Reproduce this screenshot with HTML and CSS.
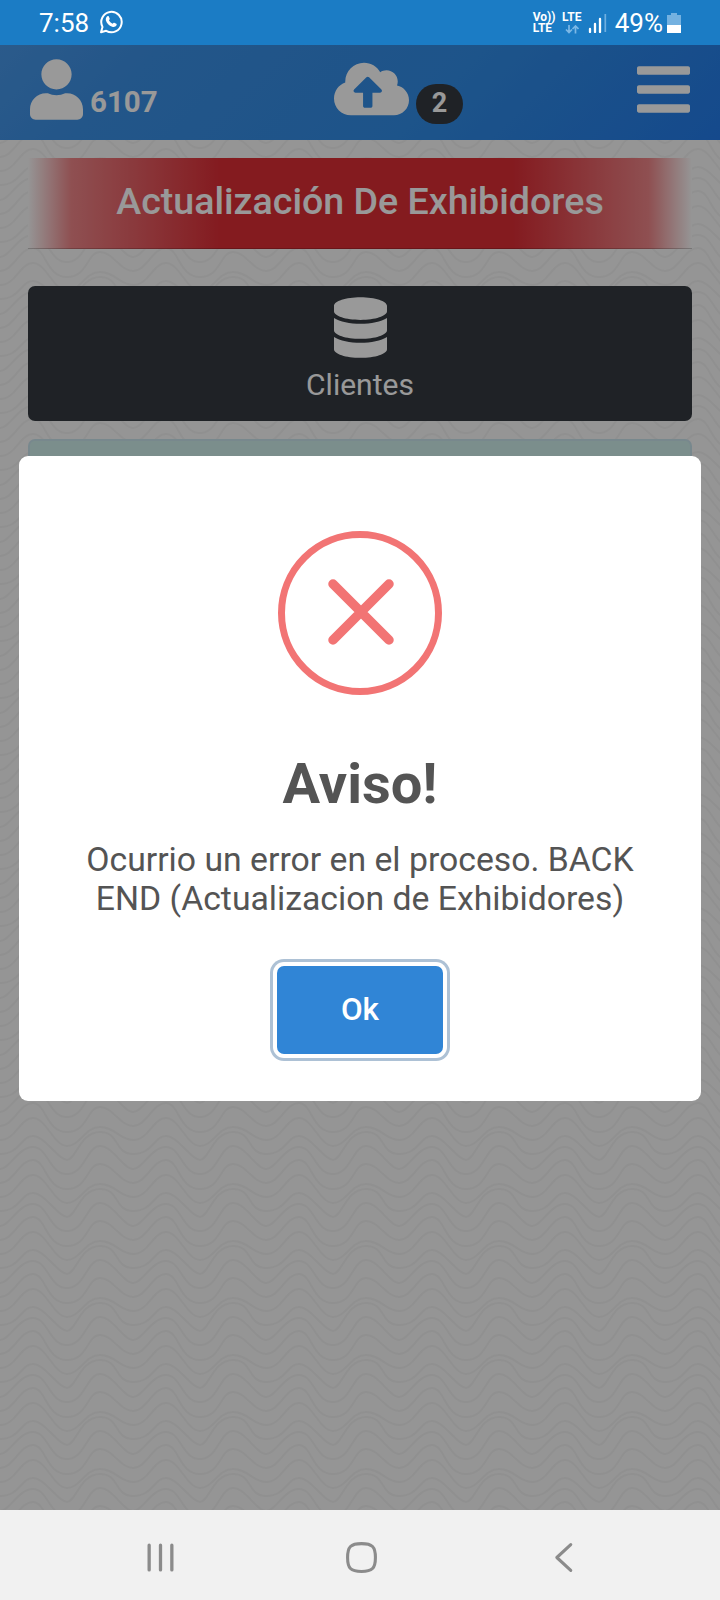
FILE: index.html
```
<!DOCTYPE html>
<html lang="es">
<head>
  <meta charset="UTF-8" />
  <meta name="viewport" content="width=device-width, initial-scale=1.0"/>
  <title>Actualización De Exhibidores</title>
  <link rel="stylesheet" href="styles.css">
</head>
<body>

  <div class="status-bar">
    <div class="status-left">
      <span class="time">7:58</span>
      <svg class="whatsapp" viewBox="0 0 24 24">
        <path d="M2 22.2l1.5-5.3A10.2 10.2 0 1 1 7.200 20.800z" fill="none" stroke="#fff" stroke-width="2" stroke-linejoin="round"/>
        <path d="M8.300 6.300c.5-.4 1.200-.4 1.500.2l.9 2c.2.5 0 .9-.8 1.800.8 1.600 2 2.700 3.700 3.500.9-1.100 1.200-1.300 1.700-1.100l2 1c.5.3.5.8.2 1.500-.8 1.600-2.600 2-4.300 1.500-3.300-1-5.400-3.200-6.300-6.100-.4-1.700.3-3.400 1.400-4.300z" fill="#fff"/>
      </svg>
    </div>
    <div class="status-right">
      <div class="volte"><span>Vo))</span><span>LTE</span></div>
      <div class="lte">
        <span>LTE</span>
        <svg viewBox="0 0 14 9"><path d="M4 0v7M1 4.500l3 3 3-3M10.500 8.500v-7M7.500 4l3-3 3 3" fill="none" stroke="#7cb8e6" stroke-width="1.700"/></svg>
      </div>
      <svg class="signal" viewBox="0 0 19 20">
        <path d="M2 16v3M7 11v8M12 6v13" stroke="#fff" stroke-width="2.300" stroke-linecap="round"/>
        <path d="M17.300 1v18" stroke="#6fafe0" stroke-width="1.700"/>
      </svg>
      <span class="battery-text">49%</span>
      <svg class="battery" viewBox="0 0 14 20">
        <path d="M4 0h6v2h4v10H0V2h4z" fill="#74b1e0"/>
        <path d="M0 12h14v8H0z" fill="#fff"/>
      </svg>
    </div>
  </div>

  <div class="app">
    <svg class="waves">
      <defs>
        <pattern id="wave" y="12" width="133" height="57" patternUnits="userSpaceOnUse">
          <g fill="none" stroke="#f1f1f1" stroke-width="2">
            <path id="w1" d="M0 0C16 0 20-22 33-22S54 6 67 6S85-13 100-13S120 0 133 0"/>
            <path id="w2" d="M0 14C20 14 21-4 33-4S58 20 67 20S80-8 100-8S114 14 133 14"/>
            <path id="w3" d="M0 29C10 29 18 7 33 7S49 34 67 34S87 6 100 6S123 29 133 29"/>
            <path id="w4" d="M0 43C13 43 20 20 33 20S46 49 67 49S87 24 100 24S120 43 133 43"/>
            <use href="#w1" y="57"/>
            <use href="#w2" y="57"/>
            <use href="#w3" y="57"/>
            <use href="#w4" y="-57"/>
          </g>
        </pattern>
      </defs>
      <rect width="100%" height="100%" fill="url(#wave)"/>
    </svg>

    <header>
      <div class="user">
        <svg class="icon-user" viewBox="0 0 448 512"><path d="M224 256c70.700 0 128-57.300 128-128S294.700 0 224 0 96 57.300 96 128s57.300 128 128 128zm89.600 32h-16.700c-22.200 10.200-46.900 16-72.900 16s-50.600-5.800-72.900-16h-16.700C60.200 288 0 348.200 0 422.400V464c0 26.500 21.500 48 48 48h352c26.500 0 48-21.500 48-48v-41.600c0-74.200-60.200-134.400-134.400-134.400z"/></svg>
        <span>6107</span>
      </div>
      <div class="upload">
        <svg class="icon-cloud" viewBox="0 0 640 512"><path d="M537.600 226.600c4.100-10.700 6.400-22.400 6.400-34.600 0-53-43-96-96-96-19.700 0-38.100 6-53.300 16.200C367 64.200 315.300 32 256 32c-88.400 0-160 71.600-160 160 0 2.700.1 5.400.2 8.100C40.200 219.800 0 273.200 0 336c0 79.500 64.500 144 144 144h368c70.700 0 128-57.300 128-128 0-61.900-44-113.600-102.400-125.400zM393.400 288H328v112c0 8.800-7.200 16-16 16h-48c-8.800 0-16-7.200-16-16V288h-65.400c-14.300 0-21.400-17.200-11.300-27.300l105.400-105.400c6.200-6.200 16.400-6.200 22.600 0l105.400 105.400c10.100 10.100 2.900 27.300-11.300 27.300z"/></svg>
        <span class="badge">2</span>
      </div>
      <svg class="icon-bars" viewBox="0 0 448 512"><path d="M16 132h416c8.800 0 16-7.200 16-16V76c0-8.800-7.200-16-16-16H16C7.200 60 0 67.200 0 76v40c0 8.800 7.200 16 16 16zm0 160h416c8.800 0 16-7.200 16-16v-40c0-8.800-7.200-16-16-16H16c-8.800 0-16 7.200-16 16v40c0 8.800 7.200 16 16 16zm0 160h416c8.800 0 16-7.200 16-16v-40c0-8.800-7.200-16-16-16H16c-8.800 0-16 7.200-16 16v40c0 8.800 7.200 16 16 16z"/></svg>
    </header>

    <main>
      <h1 class="banner">Actualización De Exhibidores</h1>
      <div class="card card-dark">
        <svg class="icon-database" viewBox="0 0 448 512"><path d="M448 73.143v45.714C448 159.143 347.667 192 224 192S0 159.143 0 118.857V73.143C0 32.857 100.333 0 224 0s224 32.857 224 73.143zM448 176v102.857C448 319.143 347.667 352 224 352S0 319.143 0 278.857V176c48.125 33.143 136.208 48.572 224 48.572S399.874 209.143 448 176zm0 160v102.857C448 479.143 347.667 512 224 512S0 479.143 0 438.857V336c48.125 33.143 136.208 48.572 224 48.572S399.874 369.143 448 336z"/></svg>
        <span>Clientes</span>
      </div>
      <div class="card card-info"></div>
    </main>

    <!-- Modal -->
    <div class="overlay">
      <div class="modal">
        <svg class="error-icon" viewBox="0 0 164 164">
          <circle cx="82" cy="82" r="78.500" stroke-width="7"/>
          <path d="M55 53l56 56M111 53l-56 56" stroke-width="9.500" stroke-linecap="round"/>
        </svg>
        <h2>Aviso!</h2>
        <p>Ocurrio un error en el proceso. BACK END (Actualizacion de Exhibidores)</p>
        <button class="btn">Ok</button>
      </div>
    </div>
  </div>

  <div class="nav-bar">
    <svg viewBox="0 0 32 32"><path d="M5 4v24M16 4v24M27 4v24" stroke-width="3.200"/></svg>
    <svg viewBox="0 0 32 32"><path d="M16 2.500c10.500 0 13.500 3 13.500 13.500S26.500 29.500 16 29.500 2.500 26.500 2.500 16 5.500 2.500 16 2.500z" stroke-width="3"/></svg>
    <svg viewBox="0 0 32 32"><path d="M24 3.500L10.500 16 24 28.500" stroke-width="3"/></svg>
  </div>

</body>
</html>
```

FILE: styles.css
```
* { margin: 0; padding: 0; box-sizing: border-box; }

body {
  font-family: Roboto, sans-serif;
  width: 720px;
  height: 1600px;
  display: flex;
  flex-direction: column;
  overflow: hidden;
}

svg { display: block; }

/* --- Phone status bar --- */
.status-bar {
  height: 45px;
  background: #1b7cc5;
  color: white;
  display: flex;
  justify-content: space-between;
  align-items: center;
  padding: 1px 39px 0;
}

.status-left,
.status-right {
  display: flex;
  align-items: center;
}

.status-left { gap: 10px; }

.time,
.battery-text {
  font-size: 26px;
  line-height: 44px;
}

.whatsapp {
  width: 24px;
  height: 24px;
  margin-bottom: 2px;
}

.volte,
.lte {
  display: flex;
  flex-direction: column;
  font-size: 12px;
  line-height: 11px;
  font-weight: 700;
}

.volte { width: 28px; }

.lte {
  width: 22px;
  margin-right: 5px;
  align-items: center;
}

.lte svg {
  width: 14px;
  height: 9px;
  margin-top: 2px;
}

.signal {
  width: 19px;
  height: 20px;
  margin-right: 8px;
}

.battery {
  width: 14px;
  height: 20px;
  margin-left: 4px;
}

/* --- App --- */
.app {
  position: relative;
  flex: 1;
  background: #f8f8f8;
}

.waves {
  position: absolute;
  left: 0; top: 0;
  width: 100%; height: 100%;
}

header {
  position: relative;
  height: 95px;
  padding: 14px 30px 0;
  background: linear-gradient(135deg, #4897e8 0%, #3b8fe4 20%, #318ce6 60%, #237be9 100%);
  color: white;
  fill: white;
  display: flex;
}

.user,
.upload {
  display: flex;
}

.user {
  width: 304px;
  gap: 7px;
  font-size: 29.500px;
  font-weight: 700;
}

.user span {
  line-height: 34px;
  margin-top: 26px;
}

.icon-user,
.icon-bars,
.icon-database {
  width: 53px;
  height: 61px;
}

.icon-cloud {
  width: 75px;
  height: 60px;
}

.upload {
  flex: 1;
  gap: 7px;
}

.badge {
  width: 47px;
  height: 40px;
  margin-top: 25px;
  border-radius: 20px;
  background: #343a40;
  font-size: 27px;
  font-weight: 700;
  line-height: 39px;
  text-align: center;
}

main {
  position: relative;
  padding: 18px 28px 0;
  display: flex;
  flex-direction: column;
}

.banner {
  height: 91px;
  margin-bottom: 37px;
  background: linear-gradient(90deg, #f9f9f9 0%, #ee8588 6.500%, #dc2d35 29%, #dc2d35 73%, #ee8588 93.500%, #f9f9f9 100%);
  border-bottom: 1px solid rgba(0,0,0,0.2);
  color: white;
  font-size: 37.600px;
  font-weight: 500;
  line-height: 86px;
  text-align: center;
}

.card {
  height: 135px;
  margin-bottom: 18px;
  border-radius: 7px;
  display: flex;
  flex-direction: column;
  align-items: center;
}

.card-dark {
  padding-top: 11px;
  background: #343a40;
  color: white;
  fill: white;
  font-size: 30px;
}

.card-dark span {
  line-height: 36px;
  margin-top: 9px;
}

.card-info {
  background: #ceede9;
  border: 2px solid #c8e3ec;
}

/* --- Modal --- */
.overlay {
  position: absolute;
  left: 0; top: 0;
  width: 100%; height: 100%;
  padding-top: 2px;
  background: rgba(0,0,0,0.4);
  display: flex;
  justify-content: center;
  align-items: center;
}

.modal {
  width: 682px;
  height: 645px;
  padding: 75px 60px 0;
  background: white;
  border-radius: 9px;
  color: #545454;
  display: flex;
  flex-direction: column;
  align-items: center;
  text-align: center;
}

.error-icon {
  width: 164px;
  height: 164px;
  fill: none;
  stroke: #f27474;
}

.modal h2 {
  margin-top: 56px;
  font-size: 56px;
  line-height: 66px;
  font-weight: 700;
}

.modal p {
  margin-top: 23px;
  font-size: 33.750px;
  line-height: 39px;
}

.btn {
  width: 166px;
  height: 88px;
  margin-top: 48px;
  padding-bottom: 2px;
  border: none;
  border-radius: 7px;
  background: #3085d6;
  box-shadow: 0 0 0 4px #fff, 0 0 0 7px #adc1d5;
  color: white;
  font-family: inherit;
  font-size: 31.500px;
  font-weight: 500;
}

/* --- Phone navigation --- */
.nav-bar {
  height: 90px;
  padding: 5px 141px 0 144px;
  background: #f1f1f1;
  display: flex;
  justify-content: space-between;
  align-items: center;
}

.nav-bar svg {
  width: 33px;
  height: 33px;
  fill: none;
  stroke: #8b8b8b;
  stroke-linecap: round;
  stroke-linejoin: round;
}
```
